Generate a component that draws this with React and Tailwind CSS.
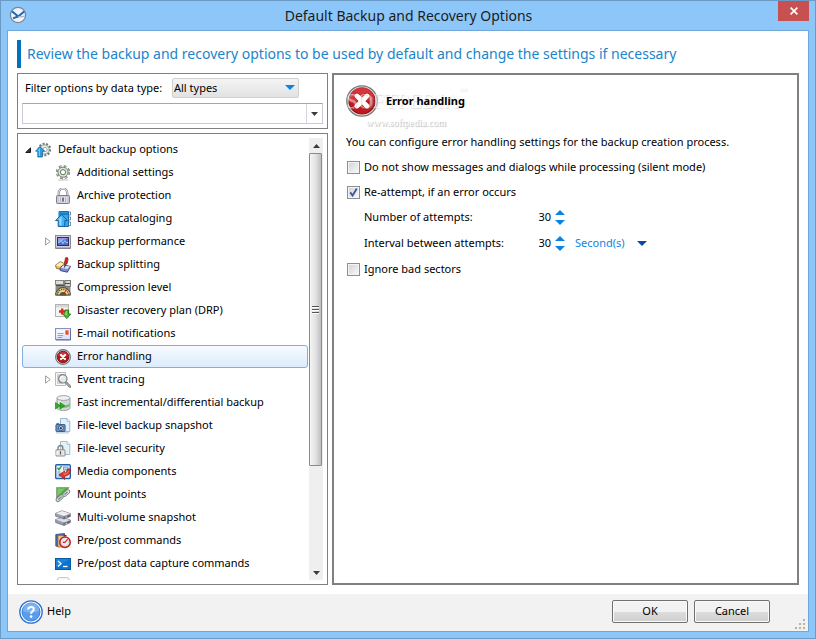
import React, { useState } from 'react';

const TreeIcon = ({ children }) => (
  <svg viewBox="0 0 16 16" className="h-4 w-4 shrink-0" aria-hidden="true">
    {children}
  </svg>
);

const RootIcon = () => (
  <TreeIcon>
    <circle cx="9.5" cy="7.5" r="5.6" fill="none" stroke="#6f7b77" strokeWidth="2.4" strokeDasharray="2 1.4" />
    <circle cx="9.5" cy="7.5" r="4.6" fill="#e6ebe6" stroke="#8d9995" strokeWidth="0.8" />
    <circle cx="10" cy="7.5" r="2.1" fill="#fff" stroke="#8d9995" strokeWidth="0.8" />
    <path d="M5 4.5 L0.6 9.2 H2.8 V15 H7.4 V9.2 H9.6 Z" fill="#2f9be0" stroke="#17659f" strokeWidth="0.8" />
    <path d="M5 5.8 L2.6 8.4 H3.8 V14 H5 Z" fill="#7cc8f5" />
  </TreeIcon>
);

const GearIcon = () => (
  <TreeIcon>
    <ellipse cx="8" cy="14.9" rx="5.5" ry="0.9" fill="#d6d6d6" />
    <circle cx="8" cy="7.2" r="6.1" fill="none" stroke="#5d6e62" strokeWidth="2" strokeDasharray="2.6 2.2" />
    <circle cx="8" cy="7.2" r="6" fill="none" stroke="#dfe8d8" strokeWidth="1" strokeDasharray="1.8 3" strokeDashoffset="-0.4" />
    <circle cx="8" cy="7.2" r="5" fill="#dfe8d8" stroke="#6d7d72" strokeWidth="0.9" />
    <circle cx="8" cy="7.2" r="2.6" fill="#fff" stroke="#5d6e62" strokeWidth="1" />
  </TreeIcon>
);

const LockIcon = () => (
  <TreeIcon>
    <path d="M3.8 8 V4.8 a4.2 4.2 0 0 1 8.4 0 V8" fill="none" stroke="#8a8896" strokeWidth="2.4" />
    <path d="M3.8 8 V4.8 a4.2 4.2 0 0 1 8.4 0 V8" fill="none" stroke="#dfdee8" strokeWidth="1.1" />
    <rect x="1.5" y="7.5" width="13" height="8" rx="0.8" fill="#c9c8d4" stroke="#82808f" />
    <rect x="4" y="9" width="8" height="5.4" fill="#e4e3eb" />
    <path d="M5.5 9.3 V14 M10.5 9.3 V14" stroke="#a7a5b3" strokeWidth="0.8" />
    <rect x="7.2" y="9.6" width="1.6" height="4" fill="#5c5a68" />
  </TreeIcon>
);

const CatalogIcon = () => (
  <TreeIcon>
    <path d="M4 0.5 H13.5 V15.5 H4 Z" fill="#3aa5e6" stroke="#1b6fae" />
    <path d="M5 1.5 H13 V4 H5 Z" fill="#1580cc" />
    <path d="M14 1 h1.5 v3 H14 M14 6 h1.5 v3 H14 M14 11 h1.5 v3.5 H14" fill="#fff" stroke="#4c7188" strokeWidth="0.8" />
    <path d="M6.5 3.5 L0.6 9.6 H3.2 V15.4 H9.8 V9.6 H12.4 Z" fill="#43b2f2" stroke="#1762a0" />
    <path d="M6.5 5.2 L3 8.8 H4.4 V14.4 H6.5 Z" fill="#9ad8fa" />
  </TreeIcon>
);

const PerformanceIcon = () => (
  <TreeIcon>
    <rect x="0.5" y="1.5" width="15" height="12.5" fill="#d0d0da" stroke="#8b8b97" />
    <rect x="2.5" y="3.5" width="11" height="8" fill="#6a5fd0" stroke="#2f2d5a" />
    <path d="M3 4 H13 L3 9 Z" fill="#9d96e6" />
    <path d="M3 8.3 H5 L6.2 6.2 L8 9.6 L9.8 6.5 L11 8.5 H13" fill="none" stroke="#5cebf4" strokeWidth="1" />
    <path d="M0.5 14.5 H15.5" stroke="#83838f" />
  </TreeIcon>
);

const SplittingIcon = () => (
  <TreeIcon>
    <path d="M0.5 8.2 L5.4 4.6 L10 7 L6.5 12.8 L1.2 11.2 Z" fill="#f2bd4c" stroke="#7d6040" strokeWidth="0.8" />
    <path d="M0.9 8.2 L5.4 5.2 L9 7 L4.5 9.6 Z" fill="#fdf0c0" />
    <path d="M5 11.4 L8 8 L15.5 9.4 L12.4 15.2 L5.4 13.6 Z" fill="#7f8cc9" stroke="#333d78" strokeWidth="0.9" />
    <path d="M8 8.2 L15 9.6 L12.5 12 L6 10.9 Z" fill="#d9def5" />
    <path d="M10.6 0.7 Q13.6 0 13 2.6 L12.2 6.4 L9.4 6.2 Z" fill="#d8261c" stroke="#8d120e" strokeWidth="0.7" />
    <path d="M9.4 6.2 L12.2 6.4 L9 11.6 Z" fill="#454555" />
  </TreeIcon>
);

const CompressionIcon = () => (
  <TreeIcon>
    <path d="M0.5 0.5 H15.5 V15.5 H0.5 Z" fill="#8a8a85" />
    <rect x="0.5" y="0.5" width="8" height="4" fill="#deddd8" stroke="#777" strokeWidth="0.8" />
    <rect x="10" y="0.5" width="5.5" height="6" fill="#d4d3ce" stroke="#666" strokeWidth="0.8" />
    <path d="M1 5.5 H9.5 M10 3.5 H15" stroke="#4f4f4c" />
    <path d="M0.6 15 a7.4 7.4 0 0 1 14.8 0 Z" fill="#f0d48a" stroke="#333" strokeWidth="0.9" />
    <path d="M2.4 15 a5.6 5.6 0 0 1 11.2 0" fill="none" stroke="#5a5033" strokeWidth="1.3" strokeDasharray="1.2 1" />
    <path d="M4.6 15.4 a3.4 3.4 0 0 1 6.8 0 Z" fill="#565650" />
    <path d="M8 14.5 L11.8 9.5" stroke="#c32218" />
    <path d="M2 14 a6 6 0 0 1 2.2 -4" fill="none" stroke="#55a037" />
  </TreeIcon>
);

const RecoveryIcon = () => (
  <TreeIcon>
    <rect x="0.5" y="1.5" width="13" height="12" fill="#f3f3f3" stroke="#b3b3b3" />
    <rect x="1" y="2" width="12" height="2.4" fill="#d6d6d6" />
    <path d="M4 8.5 H10.4 M7.2 5.4 V11.6" stroke="#e3261b" strokeWidth="2.4" />
    <path d="M10 7 H13.6 V11 H15.7 L11.8 15.6 L7.9 11 H10 Z" fill="#45c02c" stroke="#1f751a" strokeWidth="0.9" />
    <path d="M10.8 8 H11.8 V12 H10 Z" fill="#98dc7d" />
  </TreeIcon>
);

const MailIcon = () => (
  <TreeIcon>
    <rect x="0.5" y="2.5" width="15" height="11" fill="#dfe5f8" stroke="#8493c4" />
    <path d="M1 14 H15.6 V3" fill="none" stroke="#5d6da8" />
    <path d="M1.5 3.5 H14.5 V6 L1.5 11 Z" fill="#f5f7fe" />
    <path d="M2.5 7.5 H8.5 M2.5 9.5 H8 M2.5 11.5 H7" stroke="#8494ca" strokeWidth="0.9" />
    <rect x="10" y="4" width="4" height="5" fill="#ec4b33" stroke="#fff" strokeWidth="0.6" />
    <path d="M12 4.5 H14 V7 Z" fill="#f59a7b" />
  </TreeIcon>
);

const ErrorIcon = () => (
  <TreeIcon>
    <circle cx="8" cy="8" r="7.4" fill="#e2e2e2" stroke="#6f6f6f" strokeWidth="1.1" />
    <circle cx="8" cy="8" r="5.8" fill="#b81519" stroke="#7d0d10" strokeWidth="0.9" />
    <path d="M3 6.8 a5.2 5.2 0 0 1 10 0 q-5 2 -10 0 Z" fill="#d8484a" opacity="0.6" />
    <path d="M6 6 L10 10 M10 6 L6 10" stroke="#fff" strokeWidth="2.2" strokeLinecap="round" />
  </TreeIcon>
);

const LargeErrorIcon = () => (
  <svg viewBox="0 0 32 32" className="h-8 w-8 shrink-0" aria-hidden="true">
    <circle cx="16" cy="16" r="15.2" fill="#e8e8e8" stroke="#777" strokeWidth="1.3" />
    <circle cx="16" cy="16" r="13" fill="#c5161b" stroke="#8d1014" strokeWidth="1.2" />
    <path d="M4 14 a12 12 0 0 1 24 0 q-12 5 -24 0 Z" fill="#e0474a" opacity="0.65" />
    <path d="M11 11 L21 21 M21 11 L11 21" stroke="#8f0f12" strokeWidth="6.4" strokeLinecap="round" opacity="0.5" />
    <path d="M11 11 L21 21 M21 11 L11 21" stroke="#fff" strokeWidth="4.8" strokeLinecap="round" />
  </svg>
);

const TracingIcon = () => (
  <TreeIcon>
    <path d="M0.5 0.5 H10.5 V13.5 H0.5 Z" fill="#f7f7f7" stroke="#bababa" />
    <path d="M2 3 H7 M2 5 H4 M2 7 H3.5 M2 9 H4 M2 11 H7" stroke="#a3a3a3" strokeWidth="0.9" />
    <path d="M10.8 10.2 L15 14.6" stroke="#777" strokeWidth="2.4" strokeLinecap="round" />
    <path d="M11 10.4 L14.8 14.4" stroke="#cfcfcf" strokeWidth="0.9" strokeLinecap="round" />
    <circle cx="7.8" cy="6.8" r="4.2" fill="#e2e8ec" stroke="#7b7f83" strokeWidth="1.2" />
    <path d="M5.4 6.6 a2.5 2.5 0 0 1 3 -2.2" fill="none" stroke="#fff" />
  </TreeIcon>
);

const IncrementalIcon = () => (
  <TreeIcon>
    <path d="M2 3 V13 a6.5 2.5 0 0 0 13 0 V3 Z" fill="#d3d7d8" stroke="#8b9294" strokeWidth="0.8" />
    <path d="M2.4 8.5 a6.3 2.4 0 0 0 12.2 0 V11 a6.3 2.4 0 0 1 -12.2 0 Z" fill="#6cc05f" />
    <path d="M3.5 4 V12 H6 V5 Z" fill="#fff" opacity="0.5" />
    <ellipse cx="8.5" cy="3" rx="6.5" ry="2.4" fill="#eff2f2" stroke="#8d9496" strokeWidth="0.8" />
    <path d="M0.5 7.5 L5 10.8 L0.5 14 Z M5 7.5 L9.8 10.8 L5 14 Z" fill="#2fae20" stroke="#187012" strokeWidth="0.6" />
  </TreeIcon>
);

const SnapshotIcon = () => (
  <TreeIcon>
    <path d="M5.5 0.5 H12 L14.8 3.3 V13.5 H5.5 Z" fill="#e1f0fb" stroke="#8cb1ce" strokeWidth="0.9" />
    <path d="M12 0.5 V3.3 H14.8" fill="#fff" stroke="#8cb1ce" strokeWidth="0.8" />
    <rect x="0.9" y="6.5" width="9.2" height="7" rx="0.7" fill="#6c92c4" stroke="#274b7d" strokeWidth="0.8" />
    <rect x="1.4" y="5.2" width="2.8" height="1.6" fill="#3d5f8f" />
    <circle cx="5.8" cy="10.2" r="2.5" fill="#e0eaf5" stroke="#24426c" strokeWidth="0.8" />
    <circle cx="5.8" cy="10.2" r="1.2" fill="#20406f" />
    <path d="M1 14.9 H14" stroke="#9eb9d3" strokeWidth="0.9" />
  </TreeIcon>
);

const SecurityIcon = () => (
  <TreeIcon>
    <path d="M5.5 0.5 H12 L14.8 3.3 V13.5 H5.5 Z" fill="#e4f2f8" stroke="#98b8c7" strokeWidth="0.9" />
    <path d="M12 0.5 V3.3 H14.8" fill="#fff" stroke="#98b8c7" strokeWidth="0.8" />
    <path d="M3 9 V7 a2.3 2.3 0 0 1 4.8 0 V9" fill="none" stroke="#858585" strokeWidth="1.5" />
    <rect x="1" y="8.8" width="9" height="6.2" rx="0.5" fill="#e6e6e6" stroke="#858585" strokeWidth="0.9" />
    <path d="M5.5 10.3 V13.5" stroke="#585858" strokeWidth="1.2" />
    <path d="M2 10 V14" stroke="#fff" />
  </TreeIcon>
);

const MediaIcon = () => (
  <TreeIcon>
    <rect x="0.7" y="0.7" width="14.6" height="13.8" rx="1" fill="#e9f2fc" stroke="#245fad" strokeWidth="1.4" />
    <path d="M2.5 3.8 L4 5.6 L6.5 2.2" fill="none" stroke="#2f9733" strokeWidth="1.4" />
    <rect x="8.5" y="3" width="4.5" height="3" fill="#bcd5ef" stroke="#5a8bc2" strokeWidth="0.7" />
    <path d="M2.6 8 H5.5 M2.6 10 H5.5 M2.6 12 H5.5" stroke="#5a8bc2" strokeWidth="0.9" />
    <path d="M15.5 5 Q15.6 11.8 9.6 12.2 V15.4 L4 10.8 L9.6 7 V9.4 Q12 9 12.3 5 Z" fill="#e5361f" stroke="#981a10" strokeWidth="0.7" />
    <path d="M9 8.4 V10.6 Q13 10.4 14 6.6" fill="none" stroke="#f88c72" strokeWidth="0.8" />
  </TreeIcon>
);

const MountIcon = () => (
  <TreeIcon>
    <path d="M1.5 0.5 H14 L8 9 L1.5 13 Z" fill="#55ad45" stroke="#8e988c" strokeWidth="0.8" />
    <path d="M2.5 1.5 H10 L2.5 9 Z" fill="#7cc968" />
    <path d="M1.5 9 V13.5" stroke="#8e988c" />
    <g fill="none" strokeLinecap="round">
      <path d="M3 12.8 L6.4 9.8" stroke="#6d7278" strokeWidth="4.6" />
      <path d="M3 12.8 L6.4 9.8" stroke="#d3d7dc" strokeWidth="3.2" />
      <path d="M3.6 12.2 L5.8 10.4" stroke="#747b82" strokeWidth="1.1" />
      <path d="M9.4 7.6 L12.8 4.6" stroke="#6d7278" strokeWidth="4.6" />
      <path d="M9.4 7.6 L12.8 4.6" stroke="#e3e6ea" strokeWidth="3.2" />
      <path d="M10 7 L12.2 5.2" stroke="#747b82" strokeWidth="1.1" />
      <path d="M6.6 9.8 L9.6 7.2" stroke="#a9afb6" strokeWidth="1.8" />
    </g>
  </TreeIcon>
);

const VolumesIcon = () => (
  <TreeIcon>
    <path d="M0.6 9.5 L7 7.5 L15.4 10 V12.5 L9 15.5 L0.6 12.5 Z" fill="#9a9bac" stroke="#6b6c7c" strokeWidth="0.7" />
    <path d="M0.8 9.6 L7 7.7 L15 10 L9 12.4 Z" fill="#dcdde6" />
    <path d="M0.6 3.3 L7 0.8 L15.4 3.6 V6.5 L9 9 L0.6 6.2 Z" fill="#9e9fb0" stroke="#6b6c7c" strokeWidth="0.7" />
    <path d="M0.8 3.3 L7 1 L15 3.6 L9 6 Z" fill="#eceef4" />
    <path d="M9 6.2 V9 M9 12.5 V15.3" stroke="#4c4d5c" strokeWidth="0.7" />
    <path d="M9.6 6.8 L14.8 4.9 V6.2 L9.6 8.3 Z M9.6 13.1 L14.8 11 V12.2 L9.6 14.6 Z" fill="#4c4d5c" />
    <path d="M10.5 7.3 L12.2 6.7 M10.5 13.7 L12.2 12.9" stroke="#f4f4f8" strokeWidth="1" />
  </TreeIcon>
);

const CommandsIcon = () => (
  <TreeIcon>
    <path d="M0.8 1.5 L9.5 0.5 V3 H4.5 V14 L0.8 13 Z" fill="#4d6d9d" stroke="#2f4a75" strokeWidth="0.8" />
    <path d="M3 2.5 H10 V14 H3 Z" fill="#f1c38f" stroke="#956f47" strokeWidth="0.7" />
    <circle cx="10" cy="9.2" r="5.2" fill="#fbfbfb" stroke="#c3221f" strokeWidth="1.6" />
    <circle cx="10" cy="9.2" r="3.7" fill="#e3eef5" stroke="#c4c4c4" strokeWidth="0.5" />
    <path d="M10 9.4 L12.6 6.4 M10 9.4 H7.8" stroke="#c3221f" strokeWidth="1.1" />
    <path d="M8.5 2.6 H11.5" stroke="#a21815" strokeWidth="1.4" />
  </TreeIcon>
);

const ConsoleIcon = () => (
  <TreeIcon>
    <rect x="0.5" y="2.5" width="15" height="11" fill="#0a72d0" stroke="#0b57a2" />
    <path d="M1 3 H15 L1 11 Z" fill="#2b8de2" opacity="0.6" />
    <path d="M3 5 L6 7.7 L3 10.4" fill="none" stroke="#fff" strokeWidth="1.3" />
    <path d="M8 10.5 H12.5" stroke="#fff" strokeWidth="1.3" />
  </TreeIcon>
);

const DiskIcon = () => (
  <TreeIcon>
    <path d="M2.5 4 Q2.5 2.5 5.5 2.5 H10.5 Q14 2.5 14 4 V13 H2.5 Z" fill="#f8f8f8" stroke="#c4c4c4" />
  </TreeIcon>
);

const treeItems = [
  { label: 'Additional settings', icon: <GearIcon /> },
  { label: 'Archive protection', icon: <LockIcon /> },
  { label: 'Backup cataloging', icon: <CatalogIcon /> },
  { label: 'Backup performance', icon: <PerformanceIcon />, branch: true },
  { label: 'Backup splitting', icon: <SplittingIcon /> },
  { label: 'Compression level', icon: <CompressionIcon /> },
  { label: 'Disaster recovery plan (DRP)', icon: <RecoveryIcon /> },
  { label: 'E-mail notifications', icon: <MailIcon /> },
  { label: 'Error handling', icon: <ErrorIcon /> },
  { label: 'Event tracing', icon: <TracingIcon />, branch: true },
  { label: 'Fast incremental/differential backup', icon: <IncrementalIcon /> },
  { label: 'File-level backup snapshot', icon: <SnapshotIcon /> },
  { label: 'File-level security', icon: <SecurityIcon /> },
  { label: 'Media components', icon: <MediaIcon /> },
  { label: 'Mount points', icon: <MountIcon /> },
  { label: 'Multi-volume snapshot', icon: <VolumesIcon /> },
  { label: 'Pre/post commands', icon: <CommandsIcon /> },
  { label: 'Pre/post data capture commands', icon: <ConsoleIcon /> },
];

const Triangle = ({ up, className }) => (
  <svg viewBox="0 0 10 5" preserveAspectRatio="none" className={className} aria-hidden="true">
    <path d={up ? 'M0 5 L5 0 L10 5 Z' : 'M0 0 L5 5 L10 0 Z'} fill="currentColor" />
  </svg>
);

const TitleBar = () => (
  <header className="flex h-[29px] shrink-0 items-start">
    <svg viewBox="0 0 18 18" className="mt-[5px] ml-[2px] h-[18px] w-[18px]" aria-hidden="true">
      <circle cx="9" cy="9" r="7.6" fill="#f1f5fa" stroke="#7b8794" strokeWidth="1.3" />
      <path d="M3 5.2 L9.2 10.4 L15.2 5.4 M4 12.4 L9.2 10.4" fill="none" stroke="#1666c4" strokeWidth="2" />
      <path d="M9.2 10.4 Q12 11.4 15.6 10" fill="none" stroke="#9fb4cc" strokeWidth="1.2" />
    </svg>
    <h1 className="flex-1 pl-3 text-center text-[14px] leading-[29px] text-[#1c1c1c]">Default Backup and Recovery Options</h1>
    <button type="button" aria-label="Close" className="flex h-5 w-[31px] items-center justify-center bg-[#c75050] text-white">
      <svg viewBox="0 0 8 8" className="h-2 w-2" aria-hidden="true">
        <path d="M0.6 0.6 L7.4 7.4 M7.4 0.6 L0.6 7.4" stroke="currentColor" strokeWidth="1.7" />
      </svg>
    </button>
  </header>
);

const FilterPanel = () => (
  <section className="border border-[#808080] p-1">
    <div className="flex h-5 items-center gap-[6px] pl-[3px]">
      <label htmlFor="data-type" className="w-[141px] whitespace-nowrap">Filter options by data type:</label>
      <div className="relative w-[127px]">
        <select id="data-type" className="block h-5 w-full appearance-none rounded-[2px] border border-[#d0d0d0] bg-linear-to-b from-[#f4f4f4] to-[#e2e2e2] pl-px leading-4 outline-none">
          <option>All types</option>
        </select>
        <Triangle className="pointer-events-none absolute top-[7px] right-1 h-[5px] w-[10px] text-[#0a84e4]" />
      </div>
    </div>
    <div className="mt-[5px] flex h-[21px] border border-[#c9cad6] border-t-[#a5a5ab]">
      <input type="text" aria-label="Search options" className="min-w-0 flex-1 px-1 outline-none" />
      <button type="button" aria-label="Show recent searches" className="flex w-4 items-center justify-center border-l border-[#d5d5e2]">
        <Triangle className="h-1 w-[7px] text-[#3c3c3c]" />
      </button>
    </div>
  </section>
);

const ScrollBar = () => (
  <div className="flex w-[14px] shrink-0 flex-col bg-[#efefef]">
    <button type="button" aria-label="Scroll up" className="flex h-[15px] shrink-0 items-center justify-center">
      <Triangle up className="h-1 w-[7px] text-[#3c3c3c]" />
    </button>
    <div className="flex flex-1 flex-col">
      <div className="mr-px flex basis-[76%] flex-col items-center justify-center gap-px rounded-[1px] border border-[#8a8a8a] bg-linear-to-r from-[#f5f5f5] via-[#e3e3e5] to-[#bfbfc4]">
        <span className="h-[2px] w-[7px] border-b border-white bg-[#555]" />
        <span className="h-[2px] w-[7px] border-b border-white bg-[#555]" />
        <span className="h-[2px] w-[7px] border-b border-white bg-[#555]" />
      </div>
    </div>
    <button type="button" aria-label="Scroll down" className="flex h-[15px] shrink-0 items-center justify-center">
      <Triangle className="h-1 w-[7px] text-[#3c3c3c]" />
    </button>
  </div>
);

const OptionsTree = ({ selected, onSelect }) => (
  <nav className="flex min-h-0 flex-1 gap-px border border-[#808080] p-1">
    <div className="min-w-0 flex-1 overflow-hidden">
      <button type="button" className="flex h-[23px] w-full items-center pl-[3px] text-left">
        <svg viewBox="0 0 6 6" className="h-[6px] w-[6px]" aria-hidden="true">
          <path d="M5.5 0.8 V5.5 H0.8 Z" fill="#333" stroke="#1c1c1c" />
        </svg>
        <span className="mr-[7px] ml-1"><RootIcon /></span>
        Default backup options
      </button>
      <ul>
        {treeItems.map((item) => (
          <li key={item.label}>
            <button
              type="button"
              onClick={() => onSelect(item.label)}
              className={`flex h-[23px] w-full items-center rounded-[3px] border pl-[22px] text-left whitespace-nowrap ${
                item.label === selected
                  ? 'border-[#84acdd] bg-linear-to-b from-[#f7fbff] to-[#dcebfc]'
                  : 'border-transparent'
              }`}
            >
              <span className="w-[10px]">
                {item.branch && (
                  <svg viewBox="0 0 6 9" className="h-[9px] w-[6px]" aria-hidden="true">
                    <path d="M0.6 0.9 L5.2 4.5 L0.6 8.1 Z" fill="#fff" stroke="#9a9a9a" />
                  </svg>
                )}
              </span>
              {item.icon}
              <span className="pl-[6px]">{item.label}</span>
            </button>
          </li>
        ))}
        <li className="h-[23px] pl-[33px]"><DiskIcon /></li>
      </ul>
    </div>
    <ScrollBar />
  </nav>
);

const CheckOption = ({ label, checked, onChange }) => (
  <label className="flex h-[25px] items-center gap-1 pl-px">
    <span className="relative h-[13px] w-[13px]">
      <input
        type="checkbox"
        checked={checked}
        onChange={(e) => onChange(e.target.checked)}
        className="block h-[13px] w-[13px] appearance-none border border-[#8e8f8f] bg-linear-to-br from-[#cfd2d8] to-[#fafafa] shadow-[inset_0_0_0_1px_#f4f4f4]"
      />
      {checked && (
        <svg viewBox="0 0 13 13" className="pointer-events-none absolute inset-0 h-[13px] w-[13px]" aria-hidden="true">
          <path d="M3.2 6.4 L5.6 9.6 L9.8 2.6" fill="none" stroke="#3f5a9d" strokeWidth="1.9" />
        </svg>
      )}
    </span>
    {label}
  </label>
);

const NumberField = ({ id, label, children }) => {
  const [value, setValue] = useState(30);

  return (
    <div className="flex h-[25px] items-center pl-[18px]">
      <label htmlFor={id} className="w-[167px]">{label}</label>
      <input
        id={id}
        type="text"
        value={value}
        onChange={(e) => setValue(Number(e.target.value) || 0)}
        className="w-5 text-right outline-none"
      />
      <span className="ml-1 flex flex-col gap-[5px] text-[#0a84e4]">
        <button type="button" aria-label={`Increase ${label}`} onClick={() => setValue(value + 1)}>
          <Triangle up className="h-[5px] w-[10px]" />
        </button>
        <button type="button" aria-label={`Decrease ${label}`} onClick={() => setValue(value - 1)}>
          <Triangle className="h-[5px] w-[10px]" />
        </button>
      </span>
      {children}
    </div>
  );
};

const ErrorHandlingPane = () => {
  const [silent, setSilent] = useState(false);
  const [reattempt, setReattempt] = useState(true);
  const [ignoreBad, setIgnoreBad] = useState(false);

  return (
    <main className="min-w-0 flex-1 border-2 border-[#808080] pt-[10px] pl-3">
      <div className="relative flex h-8 items-center gap-2">
        <LargeErrorIcon />
        <div className="pointer-events-none absolute top-0 left-0 font-['Liberation_Serif',serif] text-white">
          <p className="flex items-start text-[21px] leading-8 opacity-50 [text-shadow:1px_1px_1px_#bbb]">
            SOFTPEDIA<span className="text-[8px] leading-3">™</span>
          </p>
          <p className="pl-5 text-[10px] leading-3 [text-shadow:1px_1px_1px_#aaa]">www.softpedia.com</p>
        </div>
        <h2 className="relative font-bold">Error handling</h2>
      </div>
      <p className="mt-4 leading-[18px]">You can configure error handling settings for the backup creation process.</p>
      <div className="mt-1 flex flex-col">
        <CheckOption label="Do not show messages and dialogs while processing (silent mode)" checked={silent} onChange={setSilent} />
        <CheckOption label="Re-attempt, if an error occurs" checked={reattempt} onChange={setReattempt} />
        <div className="flex flex-col gap-px pb-px">
          <NumberField id="attempts" label="Number of attempts:" />
          <NumberField id="interval" label="Interval between attempts:">
            <div className="relative ml-[10px] text-[#0a84e4]">
              <select aria-label="Interval unit" className="w-[72px] appearance-none outline-none">
                <option>Second(s)</option>
              </select>
              <Triangle className="pointer-events-none absolute top-[6px] right-0 h-[5px] w-[10px] text-[#0a47a8]" />
            </div>
          </NumberField>
        </div>
        <CheckOption label="Ignore bad sectors" checked={ignoreBad} onChange={setIgnoreBad} />
      </div>
    </main>
  );
};

const buttonClass =
  'h-[23px] w-[76px] rounded-[2px] border border-[#707070] bg-linear-to-b from-[#f2f2f2] from-50% via-[#dddddd] via-50% to-[#cfcfcf] shadow-[inset_0_0_0_1px_#fafafa]';

const Footer = () => (
  <footer className="flex h-[37px] shrink-0 items-center bg-[#f2f2f2] pb-[2px] pl-[11px]">
    <a href="#help" className="flex items-center gap-1">
      <svg viewBox="0 0 24 24" className="h-6 w-6" aria-hidden="true">
        <circle cx="12" cy="12" r="11.2" fill="#fff" stroke="#2f72cf" strokeWidth="1.3" />
        <circle cx="12" cy="12" r="9" fill="#5a9ded" stroke="#3c80d6" />
        <path d="M3.8 11 a8.2 8.2 0 0 1 16.4 0 Q12 14 3.8 11 Z" fill="#8fc0f7" opacity="0.6" />
        <path d="M9.2 9.6 Q9.2 7 12 7 Q14.8 7 14.8 9.3 Q14.8 10.8 13.2 11.7 Q12.1 12.4 12.1 13.8" fill="none" stroke="#fff" strokeWidth="2" />
        <circle cx="12.1" cy="16.6" r="1.3" fill="#fff" />
      </svg>
      Help
    </a>
    <div className="ml-auto flex gap-[6px]">
      <button type="button" className={buttonClass}>OK</button>
      <button type="button" className={buttonClass}>Cancel</button>
    </div>
    <svg viewBox="0 0 10 10" className="mr-[3px] ml-[25px] h-[10px] w-[10px] self-end text-[#b5b5a2]" aria-hidden="true">
      <path d="M8 0h2v2h-2z M4 4h2v2h-2z M8 4h2v2h-2z M0 8h2v2h-2z M4 8h2v2h-2z M8 8h2v2h-2z" fill="currentColor" />
    </svg>
  </footer>
);

const App = () => {
  const [selected, setSelected] = useState('Error handling');

  return (
    <div className="flex h-screen flex-col border border-[#6b9ac4] bg-[#8dc7fa] px-[6px] pb-[6px] font-['Noto_Sans','Open_Sans',sans-serif] text-[11px] text-black">
      <TitleBar />
      <div className="flex min-h-0 flex-1 flex-col border border-[#72a7da] bg-white">
        <div className="flex min-h-0 flex-1 flex-col px-[9px] pt-[9px] pb-[9px]">
          <h2 className="h-7 shrink-0 border-l-4 border-[#0071bc] pl-[6px] text-[14px] leading-7 text-[#1b84cb]">
            Review the backup and recovery options to be used by default and change the settings if necessary
          </h2>
          <div className="mt-[5px] flex min-h-0 flex-1 gap-[4px]">
            <div className="flex w-[311px] shrink-0 flex-col gap-1">
              <FilterPanel />
              <OptionsTree selected={selected} onSelect={setSelected} />
            </div>
            <ErrorHandlingPane />
          </div>
        </div>
        <Footer />
      </div>
    </div>
  );
};

export default App;
